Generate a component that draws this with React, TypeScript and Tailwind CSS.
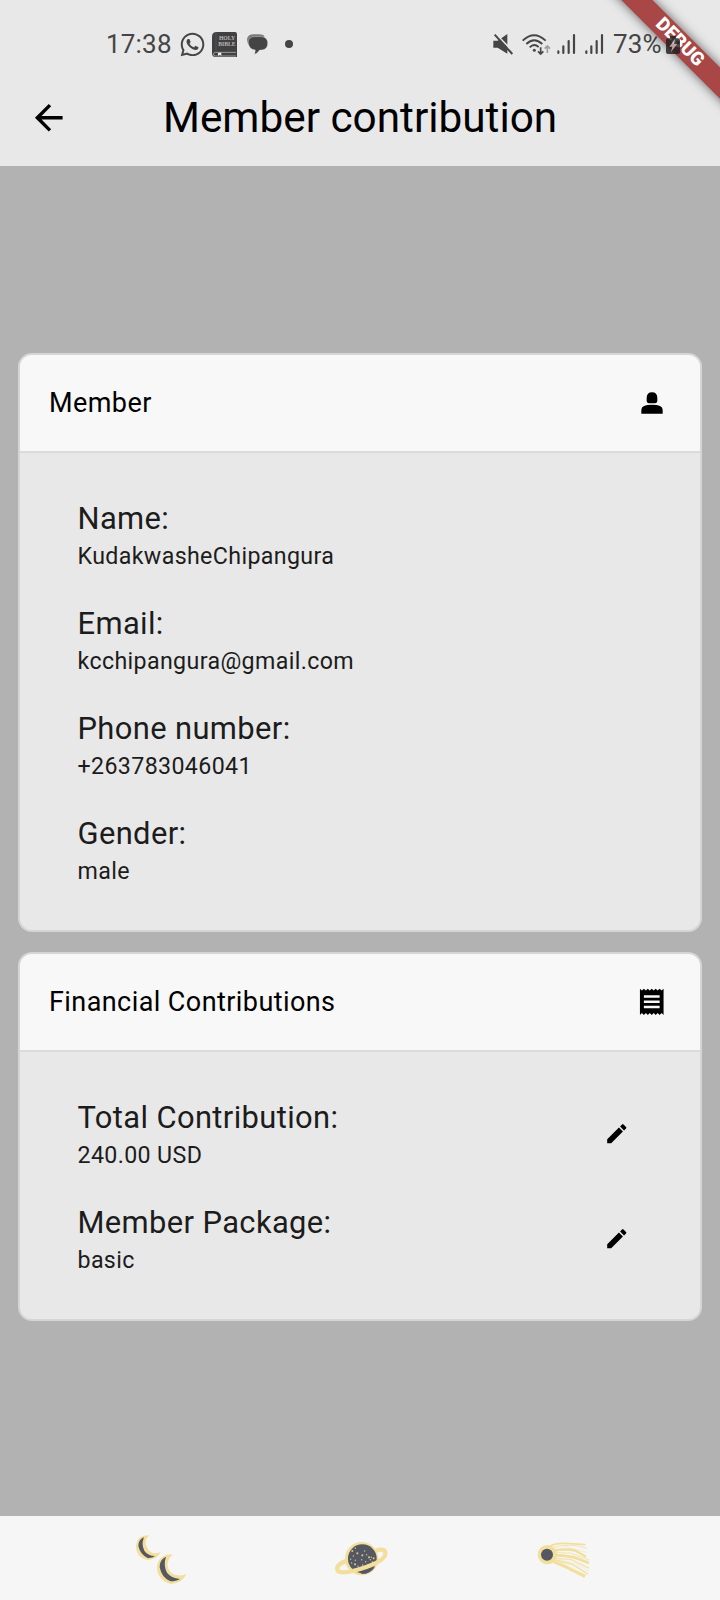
import type { ReactNode } from "react";
import { FaWhatsapp } from "react-icons/fa";
import { MdArrowBack, MdEdit, MdReceipt } from "react-icons/md";

function BibleIcon() {
  return (
    <svg className="ml-[6px] h-[25px] w-[25px]" viewBox="0 0 75 75">
      <path d="M14 0H69Q75 0 75 7V75H10Q0 75 0 62V14Q0 0 14 0Z" fill="#414141" />
      <path d="M12 2V57" stroke="#5c5c5c" strokeWidth="2" />
      <path d="M72 61H10Q4 62 4 67Q4 71 10 72H72" fill="none" stroke="#c9c9c9" strokeWidth="2" />
      <path d="M18 62h10v9l-5-3-5 3z" fill="#f4f4f4" />
      <text x="45" y="24" textAnchor="middle" fontSize="17" fontWeight="700" fill="#b9b9b9" fontFamily="Liberation Serif, serif">HOLY</text>
      <text x="45" y="42" textAnchor="middle" fontSize="17" fontWeight="700" fill="#b9b9b9" fontFamily="Liberation Serif, serif">BIBLE</text>
    </svg>
  );
}

function ChatIcon() {
  return (
    <svg className="ml-[10px] h-[21px] w-[21px]" viewBox="470 42 63 63">
      <path d="M470 58Q472 43 490 43H506Q519 43 523 50L490 58L478 78Q470 70 470 58Z" fill="#7b7b7b" />
      <path d="M474 66Q475 50 493 50H513Q532 51 532 70Q532 89 513 90H508Q502 99 493 103L495 90Q474 87 474 66Z" fill="#444" stroke="#e8e8e8" strokeWidth="1" />
    </svg>
  );
}

function ConnectivityIcons() {
  return (
    <svg className="h-[27px] w-[115px]" viewBox="30 90 345 81" fill="none" stroke="#454545">
      <path d="M40 119H53L82 99V158L53 140H40Z" fill="#454545" stroke="none" />
      <path d="M45 96L103 156" stroke="#e8e8e8" strokeWidth="5" />
      <path d="M44 101L97 159" strokeWidth="6" />
      <g strokeWidth="5.5">
        <path d="M128 119Q162 86 197 119" />
        <path d="M139 129Q162 106 187 129" />
        <path d="M149 139Q162 126 176 138" />
      </g>
      <circle cx="163" cy="148" r="4.500" fill="#454545" stroke="none" />
      <path d="M182 139V158M174 151L182 159L190 151" strokeWidth="5" />
      <path d="M202 156V136M194 143L202 135L210 143" stroke="#a0a0a0" strokeWidth="5" />
      <g strokeWidth="6.5" strokeLinecap="round">
        <path d="M235 151V156M250 136V156M266 120V156M282 102V156" />
        <path d="M319 151V156M334 136V156M350 120V156M366 102V156" />
      </g>
    </svg>
  );
}

function BatteryIcon() {
  return (
    <svg className="relative z-20 ml-[4px] h-[20px] w-[14px] opacity-80" viewBox="558 102 42 60">
      <path d="M570 108H588V115H594Q600 115 600 121V156Q600 162 594 162H564Q558 162 558 156V121Q558 115 564 115H570Z" fill="#1d1d1d" />
      <path d="M585 117L568 140H577L573 156L591 133H582Z" fill="#c9b4b4" />
    </svg>
  );
}

function DebugRibbon() {
  return (
    <div className="pointer-events-none absolute top-0 right-0 z-10 h-[130px] w-[130px] overflow-hidden">
      <div className="absolute top-[30.500px] left-[-11.500px] flex h-[21.500px] w-[200px] rotate-45 items-center justify-center bg-[#a94646] shadow-[0_0_11px_rgba(0,0,0,0.6)]">
        <span className="pl-[2px] text-[18.700px] leading-none font-black text-white">DEBUG</span>
      </div>
    </div>
  );
}

function PersonIcon() {
  return (
    <svg className="mt-[1px] h-[22px] w-[22px]" viewBox="0 0 66 66">
      <path d="M17 18Q17 1 33 1Q49 1 49 18V25Q49 34 42 34H24Q17 34 17 25Z" />
      <path d="M1 65V53Q1 38 33 38Q65 38 65 53V65Z" />
    </svg>
  );
}

function Card({ title, icon, children }: { title: string; icon: ReactNode; children: ReactNode }) {
  return (
    <section className="overflow-hidden rounded-[14px] border-2 border-[#d5d5d5] bg-[#e8e8e8]">
      <header className="flex h-[98px] items-center justify-between border-b-2 border-[#dbdbdb] bg-[#f8f8f8] pr-[32px] pb-[1px] pl-[29px]">
        <h2 className="text-[27px] leading-[38px] tracking-[0.420px] text-black">{title}</h2>
        <span className="flex w-[32px] items-center justify-center">{icon}</span>
      </header>
      <div className="flex flex-col gap-[27px] pt-[43px] pb-[41px] pl-[57.500px] pr-[71px]">{children}</div>
    </section>
  );
}

function Field({ label, value, editable }: { label: string; value: string; editable?: boolean }) {
  return (
    <div className="flex h-[78px] items-center justify-between text-[#1c1c1c]">
      <div>
        <div className="text-[30.900px] leading-[41px] tracking-[0.380px]">{label}</div>
        <div className="text-[23.200px] leading-[34px] tracking-[0.370px]">{value}</div>
      </div>
      {editable && <MdEdit className="size-[25.500px] text-black" />}
    </div>
  );
}

function MoonsIcon() {
  return (
    <svg className="h-[84px] w-[100px]" viewBox="0 33 300 252">
      <path d="M87 91Q52 89 48 122Q48 157 83 165Q111 164 122 141Q101 151 86 136Q67 111 87 91Z" fill="#f1df9b" />
      <path d="M72 97Q56 102 55 123Q61 149 83 159Q97 160 105 153Q83 152 73 137Q63 119 72 97Z" fill="#555763" />
      <path d="M158 148Q117 147 111 185Q111 224 152 237Q187 235 199 206Q174 218 154 204Q129 178 158 148Z" fill="#f1df9b" />
      <path d="M138 155Q119 163 119 187Q125 218 151 229Q170 229 180 222Q153 219 141 203Q129 181 138 155Z" fill="#555763" />
    </svg>
  );
}

const stars = [[97,138],[106,130],[100,153],[112,145],[92,163],[106,166],[127,151],[140,149],[134,138],[147,157],[128,180],[114,184],[105,178],[137,170],[151,164],[158,172],[144,180],[154,157],[161,160],[95,174],[125,164]];

function PlanetIcon() {
  return (
    <svg className="h-[84px] w-[100px]" viewBox="0 33 300 252">
      <circle cx="125" cy="161" r="50" fill="#f1df9b" />
      <circle cx="127" cy="161" r="43" fill="#555763" />
      {stars.map(([x, y], i) => (
        <circle key={i} cx={x} cy={y} r={i % 3 === 0 ? 3.2 : 2.2} fill="#cfc28d" />
      ))}
      <path d="M81 167Q45 179 53 197Q66 211 139 186Q201 164 196 141Q192 129 167 137" fill="none" stroke="#f1df9b" strokeWidth="13" />
      <path d="M117 201Q145 196 165 185Q151 207 126 207Z" fill="#555763" />
    </svg>
  );
}

function CometIcon() {
  return (
    <svg className="h-[84px] w-[100px]" viewBox="0 33 300 252" fill="none" stroke="#f1df9b">
      <path d="M89 124Q109 112 150 116L196 119" strokeWidth="5" />
      <path d="M96 128Q137 118 170 122L201 130" strokeWidth="3" opacity=".75" />
      <path d="M101 137Q137 130 166 137L198 155" strokeWidth="7" />
      <path d="M109 143L151 144L207 165" strokeWidth="3" opacity=".8" />
      <path d="M107 151Q149 151 176 162L207 174" strokeWidth="8" />
      <path d="M108 160L154 164L207 190" strokeWidth="4" opacity=".8" />
      <path d="M106 165L157 178L204 207" strokeWidth="4" />
      <path d="M100 170Q136 184 155 195L195 214" strokeWidth="9" />
      <path d="M107 160L165 176L207 199M107 165L202 211M125 122L202 143" strokeWidth="2" opacity=".6" />
      <circle cx="82" cy="149" r="29" fill="#f1df9b" stroke="none" />
      <circle cx="81" cy="149" r="18" fill="#555763" stroke="none" />
    </svg>
  );
}

export default function App() {
  return (
    <div className="relative flex h-[1600px] w-[720px] flex-col overflow-hidden bg-[#b2b2b2] font-['Roboto',sans-serif]">
      <div className="h-[166px] shrink-0 bg-[#e8e8e8]">
        <div className="flex h-[88px] items-center pl-[106px] text-[26px] text-[#454545]">
          <span className="w-[73px] tracking-[0.200px]">17:38</span>
          <FaWhatsapp className="size-[27px]" />
          <BibleIcon />
          <ChatIcon />
          <span className="ml-[17px] size-[8px] rounded-full bg-[#454545]" />
          <div className="ml-[197px]">
            <ConnectivityIcons />
          </div>
          <span className="ml-[8px] w-[49px] tracking-[0.100px]">73%</span>
          <BatteryIcon />
        </div>
        <div className="flex h-[59px] items-center">
          <MdArrowBack className="ml-[28px] size-[41.500px] text-black" />
          <h1 className="ml-[93.500px] pt-px text-[42.300px] leading-[58px] text-black">Member contribution</h1>
        </div>
      </div>
      <DebugRibbon />
      <main className="flex flex-1 flex-col gap-[20px] px-[18px] pt-[187px]">
        <Card title="Member" icon={<PersonIcon />}>
          <Field label="Name:" value="KudakwasheChipangura" />
          <Field label="Email:" value="kcchipangura@gmail.com" />
          <Field label="Phone number:" value="+263783046041" />
          <Field label="Gender:" value="male" />
        </Card>
        <Card title="Financial Contributions" icon={<MdReceipt className="size-[31.500px]" />}>
          <Field label="Total Contribution:" value="240.00 USD" editable />
          <Field label="Member Package:" value="basic" editable />
        </Card>
      </main>
      <nav className="flex h-[84px] shrink-0 items-center gap-[100px] bg-[#f6f6f6] pl-[120px]">
        <MoonsIcon />
        <PlanetIcon />
        <CometIcon />
      </nav>
    </div>
  );
}
